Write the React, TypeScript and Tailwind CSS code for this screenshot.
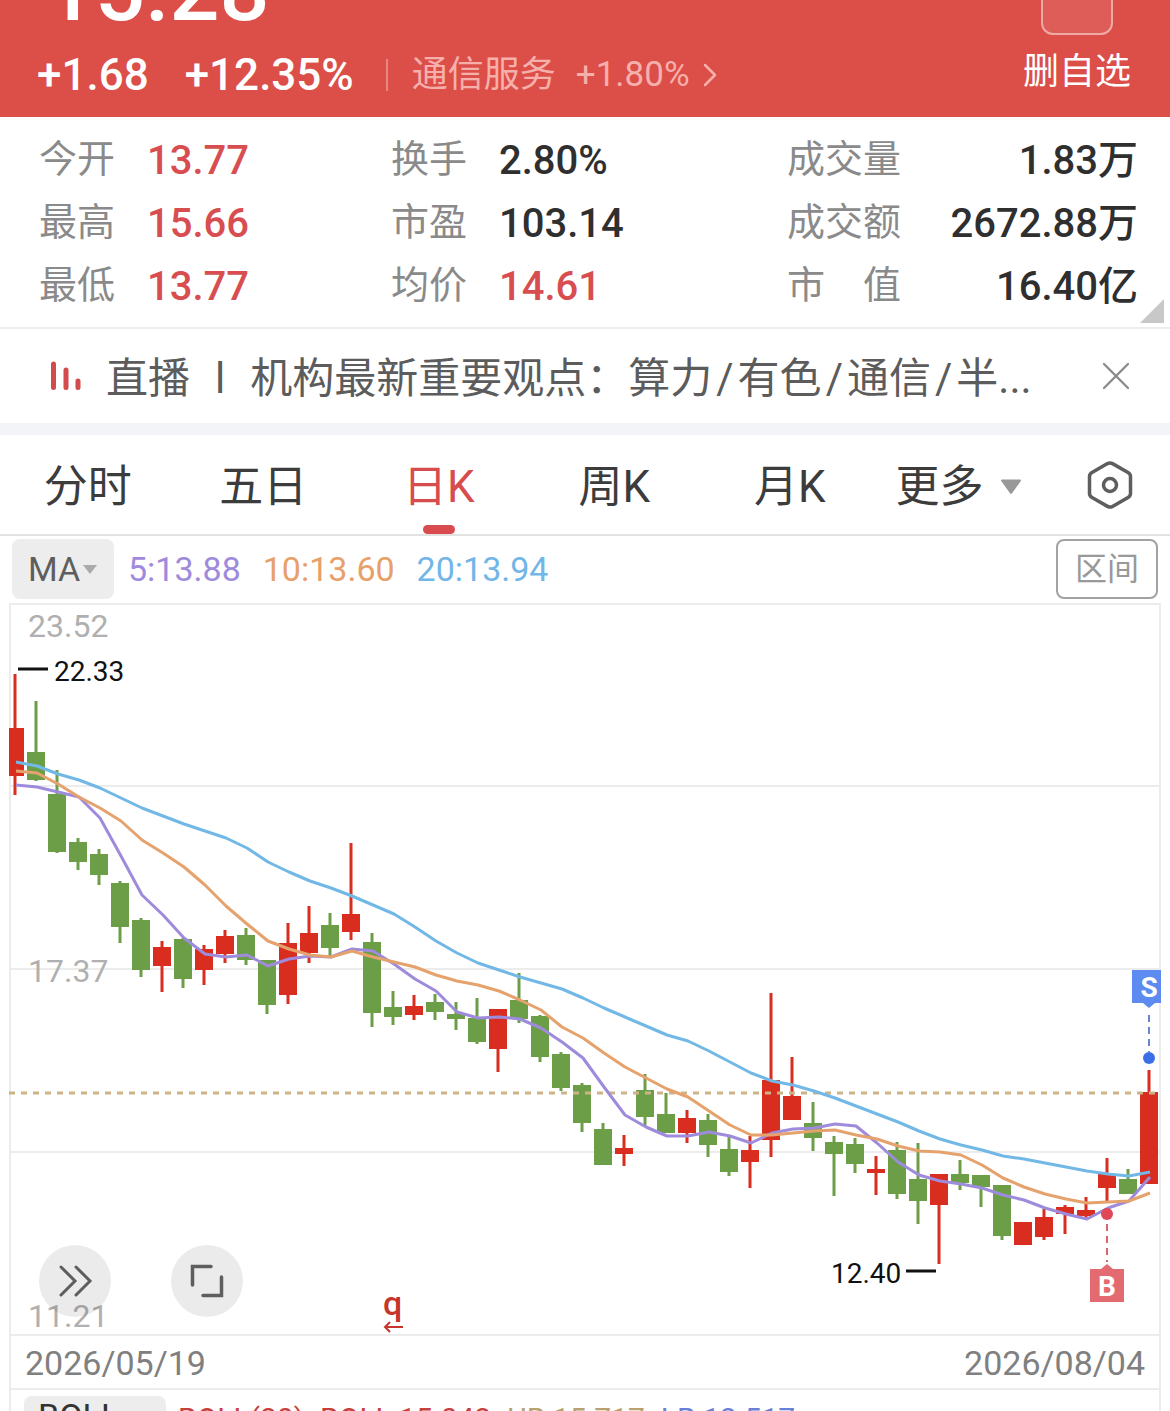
import { ChevronRight, X } from "lucide-react";
import clsx from "clsx";

type Stat = { label: string; value: string; up?: boolean };

const stats: Stat[] = [
  { label: "今开", value: "13.77", up: true },
  { label: "换手", value: "2.80%" },
  { label: "成交量", value: "1.83万" },
  { label: "最高", value: "15.66", up: true },
  { label: "市盈", value: "103.14" },
  { label: "成交额", value: "2672.88万" },
  { label: "最低", value: "13.77", up: true },
  { label: "均价", value: "14.61", up: true },
  { label: "市　值", value: "16.40亿" },
];

const tabs = ["分时", "五日", "日K", "周K", "月K"];

const topics = ["算力", "有色", "通信", "半..."];

// [direction, high, body top, body bottom, low] in chart units
type Candle = [string, number, number, number, number];

const candles: Candle[] = [
  ["r", 74, 128, 176, 195],
  ["g", 101, 152, 180, 181],
  ["g", 170, 194, 252, 253],
  ["g", 238, 242, 262, 270],
  ["g", 249, 254, 275, 285],
  ["g", 281, 283, 327, 343],
  ["g", 318, 320, 370, 377],
  ["r", 341, 347, 366, 392],
  ["g", 338, 339, 379, 388],
  ["r", 345, 349, 370, 385],
  ["r", 330, 336, 354, 363],
  ["g", 328, 335, 360, 365],
  ["g", 360, 360, 405, 414],
  ["r", 323, 343, 395, 404],
  ["r", 306, 333, 353, 363],
  ["g", 313, 325, 348, 356],
  ["r", 243, 314, 332, 340],
  ["g", 333, 342, 413, 427],
  ["g", 391, 407, 417, 425],
  ["r", 395, 406, 415, 420],
  ["g", 394, 402, 412, 420],
  ["g", 402, 414, 419, 430],
  ["g", 398, 418, 442, 444],
  ["r", 409, 409, 449, 472],
  ["g", 373, 400, 419, 423],
  ["g", 415, 416, 457, 462],
  ["g", 452, 454, 488, 491],
  ["g", 483, 485, 523, 532],
  ["g", 523, 529, 565, 565],
  ["r", 535, 548, 554, 566],
  ["g", 474, 490, 517, 526],
  ["g", 493, 514, 533, 533],
  ["r", 510, 518, 533, 543],
  ["g", 514, 520, 545, 557],
  ["g", 537, 549, 572, 576],
  ["r", 536, 550, 562, 588],
  ["r", 393, 480, 540, 557],
  ["r", 457, 496, 520, 520],
  ["g", 502, 523, 538, 551],
  ["g", 536, 542, 554, 596],
  ["g", 538, 544, 564, 573],
  ["r", 556, 569, 573, 595],
  ["g", 542, 550, 594, 599],
  ["g", 543, 579, 601, 624],
  ["r", 574, 574, 605, 664],
  ["g", 560, 574, 583, 590],
  ["g", 575, 575, 587, 607],
  ["g", 585, 585, 636, 640],
  ["r", 622, 622, 645, 645],
  ["r", 609, 617, 637, 640],
  ["r", 605, 607, 614, 634],
  ["r", 597, 610, 616, 620],
  ["r", 558, 574, 588, 603],
  ["g", 569, 579, 594, 594],
  ["r", 470, 492, 584, 584],
];

const ma5 = [
  185, 187, 192, 197, 218, 256, 295, 315, 338, 354, 357, 355, 366, 359, 356,
  357, 349, 351, 364, 379, 391, 412, 418, 417, 419, 428, 442, 458, 487, 515,
  527, 536, 536, 532, 536, 543, 533, 529, 528, 524, 526, 543, 562, 575, 581,
  584, 588, 595, 600, 608, 614, 619, 608, 601, 577,
];

const ma10 = [
  171, 173, 184, 197, 208, 221, 240, 253, 267, 285, 306, 324, 341, 349, 355,
  357, 351, 357, 362, 367, 375, 381, 385, 391, 400, 410, 427, 438, 453, 467,
  478, 489, 497, 511, 525, 535, 535, 533, 531, 530, 535, 539, 546, 551, 552,
  555, 565, 578, 587, 594, 599, 603, 602, 601, 593,
];

const ma20 = [
  162, 166, 174, 180, 188, 198, 208, 216, 224, 231, 238, 248, 262, 272, 281,
  288, 296, 305, 314, 327, 341, 353, 363, 370, 377, 383, 389, 398, 408, 417,
  426, 435, 441, 451, 462, 473, 481, 485, 491, 498, 506, 514, 522, 531, 539,
  545, 550, 556, 559, 563, 567, 571, 574, 576, 572,
];

const STEP = 21;

const toPoints = (values: number[]) =>
  values.map((y, i) => `${16 + i * STEP},${y}`).join(" ");

const QuoteHeader = () => (
  <header className="flex h-[117px] items-end justify-between overflow-hidden bg-[#dc4e48] pb-5 pl-[37px] pr-[39px] text-white">
    <div className="flex flex-col">
      <span className="mb-5 pl-2 text-[88px] font-medium leading-[70px]">
        15.28
      </span>
      <div className="flex items-center pt-2 text-[44px] font-medium leading-[44px]">
        <span>+1.68</span>
        <span className="ml-9">+12.35%</span>
        <span className="ml-8 h-8 w-0.5 bg-[#e88681]" />
        <a
          href="#sector"
          className="ml-6 flex items-center text-4xl font-normal leading-[44px] text-[#f6b0ac]"
        >
          通信服务
          <span className="ml-5 text-[35px]">+1.80%</span>
          <ChevronRight className="size-10" strokeWidth={1.5} />
        </a>
      </div>
    </div>
    <button className="flex flex-col items-center text-4xl leading-[50px]">
      <span className="mb-3 size-18 rounded-xl border-2 border-[#f0aaa6] bg-[#df5d58]" />
      删自选
    </button>
  </header>
);

const StatGrid = () => (
  <section className="relative border-b-2 border-[#ededed] pb-[9px] pl-[38px] pr-8 pt-3">
    <dl className="grid grid-cols-[32%_36%_1fr]">
      {stats.map(({ label, value, up }, i) => (
        <div key={label} className="flex h-[63px] items-center">
          <dt className="pb-0.5 pl-px text-[38px] text-[#8a8a8a]">{label}</dt>
          <dd
            className={clsx(
              "text-[40px] font-medium",
              i % 3 === 2 ? "ml-auto" : "ml-8",
              up ? "text-[#d84e50]" : "text-[#2f2f2f]"
            )}
          >
            {value}
          </dd>
        </div>
      ))}
    </dl>
    <svg className="absolute bottom-1 right-1.5 size-6" viewBox="0 0 24 24">
      <path d="M24 0V24H0Z" fill="#c8c8c8" />
    </svg>
  </section>
);

const LiveBar = () => (
  <section className="flex h-[94px] items-center pl-[50px] pr-9 text-[#5c5c5c]">
    <svg className="h-8 w-8 shrink-0" viewBox="0 0 32 32">
      <g stroke="#d24b4d" strokeWidth="5" strokeLinecap="round">
        <path d="M3.5 4V27.500M16 10V27.500M28 21V27.500" />
      </g>
    </svg>
    <a href="#live" className="ml-6 flex-1 whitespace-nowrap pt-1 text-[42px]">
      直播<span className="mx-[25px]">l</span>机构最新重要观点：
      {topics.map((topic, i) => (
        <span key={topic}>
          {i > 0 && <span className="mx-1">/</span>}
          {topic}
        </span>
      ))}
    </a>
    <button aria-label="关闭">
      <X className="size-9 text-[#8c8c8c]" viewBox="3 3 18 18" strokeWidth={1.2} />
    </button>
  </section>
);

const PeriodTabs = () => (
  <nav className="flex h-[101px] items-stretch border-b-2 border-[#e2e2e2] text-[44px] text-[#3c3c3c]">
    {tabs.map((tab) => (
      <button
        key={tab}
        className={clsx("relative w-[15%] pt-1", tab === "日K" && "text-[#d84b4e]")}
      >
        {tab}
        {tab === "日K" && (
          <span className="absolute bottom-0 left-1/2 h-[9px] w-8 -translate-x-1/2 rounded-full bg-[#d84b4e]" />
        )}
      </button>
    ))}
    <button className="ml-[18px] flex items-center gap-4 pt-1">
      更多
      <svg className="h-4 w-[22px]" viewBox="0 0 22 16">
        <path
          d="M2 1.500H20L11 14Z"
          fill="#999"
          stroke="#999"
          strokeWidth="2"
          strokeLinejoin="round"
        />
      </svg>
    </button>
    <button aria-label="设置" className="ml-auto mr-[37px]">
      <svg className="h-12 w-[46px]" viewBox="0 0 46 48" fill="none">
        <g stroke="#5e5e5e" strokeWidth="3.500" strokeLinejoin="round">
          <path d="M20.500 2.600Q23 1.200 25.500 2.600L41 11.500Q43.500 13 43.500 15.500V32.500Q43.500 35 41 36.500L25.500 45.400Q23 46.800 20.500 45.400L5 36.500Q2.500 35 2.500 32.500V15.500Q2.500 13 5 11.500Z" />
          <circle cx="23" cy="24" r="6.500" />
        </g>
      </svg>
    </button>
  </nav>
);

const MaBar = () => (
  <div className="flex h-16 items-center px-3 pt-0.5 text-[34px]">
    <button className="flex h-[60px] w-[102px] items-center justify-center gap-0.5 rounded-lg bg-[#ededed] text-[#5e5e5e]">
      MA
      <svg className="h-3 w-4" viewBox="0 0 16 12">
        <path d="M1 2H15L8 11Z" fill="#aaa" />
      </svg>
    </button>
    <span className="ml-3.5 text-[#9f8bdc]">5:13.88</span>
    <span className="ml-[22px] text-[#e8a06a]">10:13.60</span>
    <span className="ml-[22px] text-[#72b6e8]">20:13.94</span>
    <button className="ml-auto h-[60px] w-[102px] rounded-lg border-2 border-[#a2a2a2] text-[32px] text-[#999]">
      区间
    </button>
  </div>
);

const KLineChart = () => (
  <div className="relative">
    <svg className="block w-full" viewBox="0 0 1170 734">
      <g stroke="#ececec" strokeWidth="2">
        <path d="M10 734V4H1160V734M10 186H1160M10 369H1160M10 552H1160" fill="none" />
      </g>
      <g fontSize="32" fill="#b0b0b0">
        <text x="28" y="37">23.52</text>
        <text x="28" y="382">17.37</text>
        <text x="28" y="727">11.21</text>
      </g>
      {candles.map(([dir, high, top, bottom, low], i) => {
        const x = 15 + i * STEP;
        const left = Math.max(x - 9, 9);
        return (
          <g key={i} fill={dir === "r" ? "#d92d20" : "#6c9e48"}>
            <rect x={x - 1.5} y={high} width="3" height={low - high} />
            <rect x={left} y={top} width={x + 9 - left} height={bottom - top} />
          </g>
        );
      })}
      <path
        d="M9 493H1160"
        stroke="#ccb488"
        strokeWidth="3"
        strokeDasharray="6 6"
      />
      <g fill="none" strokeWidth="3" strokeLinejoin="round">
        <polyline points={toPoints(ma5)} stroke="#9f8bdc" />
        <polyline points={toPoints(ma10)} stroke="#e5a26c" />
        <polyline points={toPoints(ma20)} stroke="#72b8e6" />
      </g>
      <path d="M18 69H48M906 671H936" stroke="#111" strokeWidth="3" />
      <g fontSize="28" fill="#111">
        <text x="54" y="81">22.33</text>
        <text x="831" y="683">12.40</text>
      </g>

      {/* sell marker */}
      <path d="M1132 370H1161V403H1155L1149 408L1143 403H1132Z" fill="#5d8bf0" />
      <path d="M1149 415V452" stroke="#6a87cc" strokeWidth="2" strokeDasharray="7 5" />
      <circle cx="1149" cy="458" r="6" fill="#3b6fe8" />
      {/* buy marker */}
      <circle cx="1107" cy="614" r="6" fill="#e04858" />
      <path d="M1107 624V662" stroke="#d8646c" strokeWidth="2" strokeDasharray="7 5" />
      <path d="M1090 669H1101L1107 664L1113 669H1124V702H1090Z" fill="#e46a72" />
      <g fontSize="28" fontWeight="700" fill="#fff" textAnchor="middle">
        <text x="1149" y="397">S</text>
        <text x="1107" y="696">B</text>
      </g>

      <text x="383" y="715" fontSize="34" fontWeight="500" fill="#c5352c">q</text>
      <path
        d="M403 727H385M390 722L385 727L390 732"
        fill="none"
        stroke="#c5352c"
        strokeWidth="2"
      />
    </svg>
    <div className="absolute bottom-[17px] left-[39px] flex gap-[60px]">
      <button
        aria-label="展开"
        className="flex size-18 items-center justify-center rounded-full bg-black/8"
      >
        <svg className="size-9" viewBox="0 0 36 36" fill="none">
          <path
            d="M4 4L18 18L4 32M19 4L33 18L19 32"
            stroke="#5e5e5e"
            strokeWidth="3"
            strokeLinecap="round"
          />
        </svg>
      </button>
      <button
        aria-label="全屏"
        className="flex size-18 items-center justify-center rounded-full bg-black/8"
      >
        <svg className="size-9" viewBox="0 0 36 36" fill="none">
          <path
            d="M3.500 22V3.500H22M32.500 14V32.500H14"
            stroke="#5e5e5e"
            strokeWidth="3.500"
            strokeLinecap="round"
          />
        </svg>
      </button>
    </div>
  </div>
);

export default function App() {
  return (
    <main className="overflow-hidden bg-white font-['Roboto','Noto_Sans_CJK_SC',sans-serif]">
      <QuoteHeader />
      <StatGrid />
      <LiveBar />
      <div className="h-3 bg-[#f2f4f8]" />
      <PeriodTabs />
      <MaBar />
      <KLineChart />
      <div className="mx-[9px] border-x-2 border-[#ececec]">
        <div className="flex h-14 items-center justify-between border-y-2 border-[#ececec] px-3.5 pt-0.5 text-[34px] text-[#808080]">
          <span>2026/05/19</span>
          <span>2026/08/04</span>
        </div>
        <div className="flex h-[21px] items-start overflow-hidden pl-[13px] pt-1.5">
          <button className="flex h-[60px] w-[142px] shrink-0 items-start rounded-lg bg-[#ededed] pl-3.5 text-[34px] leading-[40px] text-[#333]">
            BOLL
          </button>
          <div className="ml-3 flex gap-4 text-[30px] leading-[46px]">
            <span className="text-[#c8403c]">BOLL(20)</span>
            <span className="text-[#c8403c]">BOLL:15.042</span>
            <span className="text-[#b8a070]">UB:15.717</span>
            <span className="text-[#6a80d8]">LB:12.517</span>
          </div>
        </div>
      </div>
    </main>
  );
}
